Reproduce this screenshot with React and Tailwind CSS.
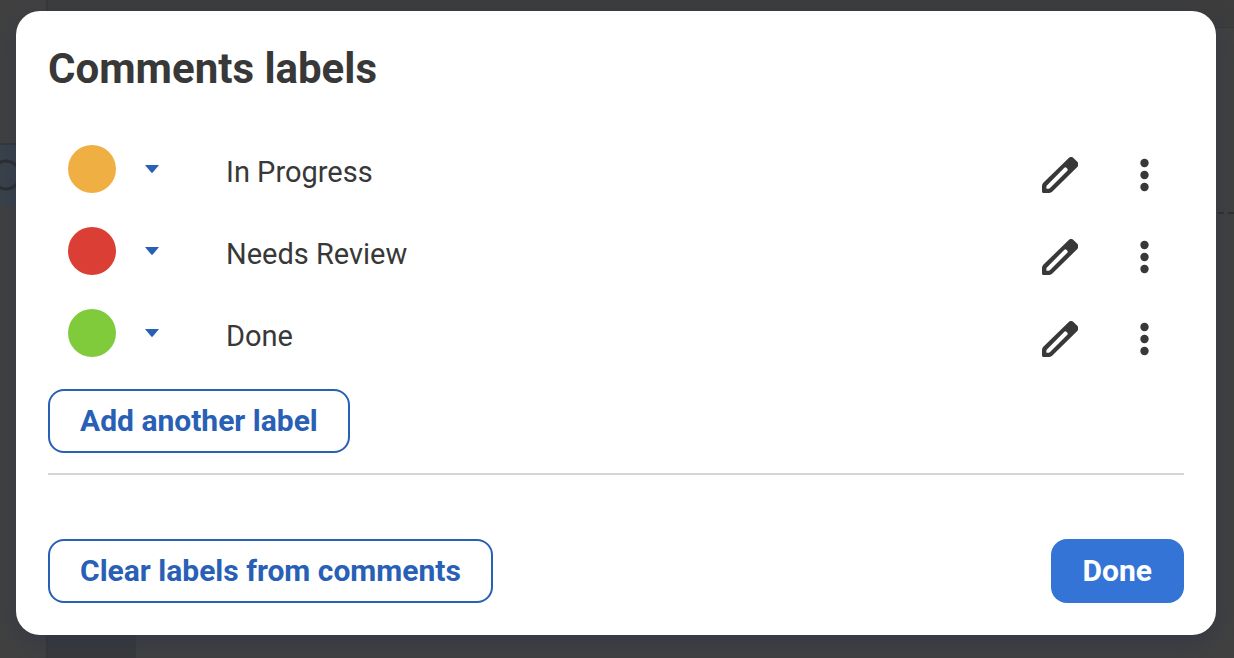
import React, { useState } from 'react';

const INITIAL_LABELS = [
  { id: 1, name: 'In Progress', swatch: 'bg-[#f0af42]' },
  { id: 2, name: 'Needs Review', swatch: 'bg-[#db3e34]' },
  { id: 3, name: 'Done', swatch: 'bg-[#80cb3c]' },
];

function PencilIcon() {
  return (
    <svg className="size-9" viewBox="0 0 36 36" aria-hidden="true">
      <path
        fill="#383838"
        fillRule="evenodd"
        d="M26.5 1.2a3.8 3.8 0 0 1 5.2 0l3.600 3.600a3.800 3.800 0 0 1 0 5.200L10.400 34.600a4.500 4.500 0 0 1-3.200 1.400H1.500A1.500 1.500 0 0 1 0 34.500V29a4.500 4.500 0 0 1 1.300-3.200ZM4.900 28.400a1.500 1.500 0 0 0-.5 1.100v2.200h2.300a1.500 1.500 0 0 0 1.100-.5L25.300 13.700a1.500 1.500 0 0 0 0-2l-.9-.9a1.500 1.500 0 0 0-2 0Z"
      />
    </svg>
  );
}

function MoreIcon() {
  return (
    <svg className="size-9" viewBox="0 0 36 36" aria-hidden="true" fill="#383838">
      <circle cx="18.500" cy="6" r="4.200" />
      <circle cx="18.500" cy="18" r="4.200" />
      <circle cx="18.500" cy="30" r="4.200" />
    </svg>
  );
}

function LabelRow({ label }) {
  return (
    <li className="flex h-[82px] items-center pl-5 pr-[22px]">
      <button type="button" className="mb-3 flex items-center gap-[29px]" aria-label={`Change color of ${label.name}`}>
        <span className={`size-12 rounded-full ${label.swatch}`} />
        <svg className="h-2 w-3.5" viewBox="0 0 14 8" aria-hidden="true">
          <path d="M0 0h14L8 7.300Q7 8.300 6 7.300Z" fill="#2860b5" />
        </svg>
      </button>
      <span className="mb-1.5 ml-[67px] flex-1 text-[29px] leading-9">{label.name}</span>
      <div className="flex items-center gap-12">
        <button type="button" aria-label={`Edit ${label.name}`}>
          <PencilIcon />
        </button>
        <button type="button" aria-label={`More options for ${label.name}`}>
          <MoreIcon />
        </button>
      </div>
    </li>
  );
}

function OutlineButton({ children, onClick }) {
  return (
    <button
      type="button"
      onClick={onClick}
      className="h-16 rounded-2xl border-2 border-[#2860b5] px-[30px] text-[30px] font-bold leading-9 text-[#2860b5]"
    >
      {children}
    </button>
  );
}

// Dimmed editor that stays visible around the dialog
function EditorBackdrop() {
  return (
    <div className="absolute inset-0 flex overflow-hidden bg-[#414141]" aria-hidden="true">
      <div className="w-[46px] shrink-0 pt-[143px]">
        <div className="flex h-[62px] items-center border-t-2 border-[#36383b] bg-[#3a424b]">
          <svg className="h-8 w-6" viewBox="0 0 24 32">
            <circle cx="6" cy="16" r="14" fill="none" stroke="#2b2e33" strokeWidth="3" />
          </svg>
        </div>
      </div>
      <div className="flex flex-1 flex-col border-l-2 border-[#373738]">
        <div className="h-7 border-b border-[#393939] bg-[#3d3d3d]" />
        <div className="flex flex-1">
          <div className="w-[88px] shrink-0 bg-[#3a3a3c]" />
          <div className="flex-1">
            <div className="h-[186px] border-b-2 border-dashed border-[#2f3033]" />
          </div>
        </div>
      </div>
    </div>
  );
}

export default function App() {
  const [labels, setLabels] = useState(INITIAL_LABELS);

  const addLabel = () => {
    setLabels([...labels, { id: labels.length + 1, name: 'New label', swatch: 'bg-[#3374d6]' }]);
  };

  return (
    <div className="relative min-h-screen pt-[11px] pr-[18px] pb-[23px] pl-4 font-['Roboto',sans-serif] text-[#383838]">
      <EditorBackdrop />
      <div
        role="dialog"
        aria-labelledby="dialog-title"
        className="relative rounded-3xl bg-white p-8 shadow-[0_8px_24px_rgba(39,50,74,0.5)]"
      >
        <h1 id="dialog-title" className="mb-[39px] text-[42px] font-bold leading-[52px]">
          Comments labels
        </h1>
        <ul>
          {labels.map((label) => (
            <LabelRow key={label.id} label={label} />
          ))}
        </ul>
        <div className="border-b-2 border-[#d5d5d5] pt-[9px] pb-5">
          <OutlineButton onClick={addLabel}>Add another label</OutlineButton>
        </div>
        <div className="mt-16 flex items-center justify-between">
          <OutlineButton>Clear labels from comments</OutlineButton>
          <button
            type="button"
            className="h-16 rounded-2xl bg-[#3374d6] px-8 text-[30px] font-bold leading-9 text-white"
          >
            Done
          </button>
        </div>
      </div>
    </div>
  );
}
